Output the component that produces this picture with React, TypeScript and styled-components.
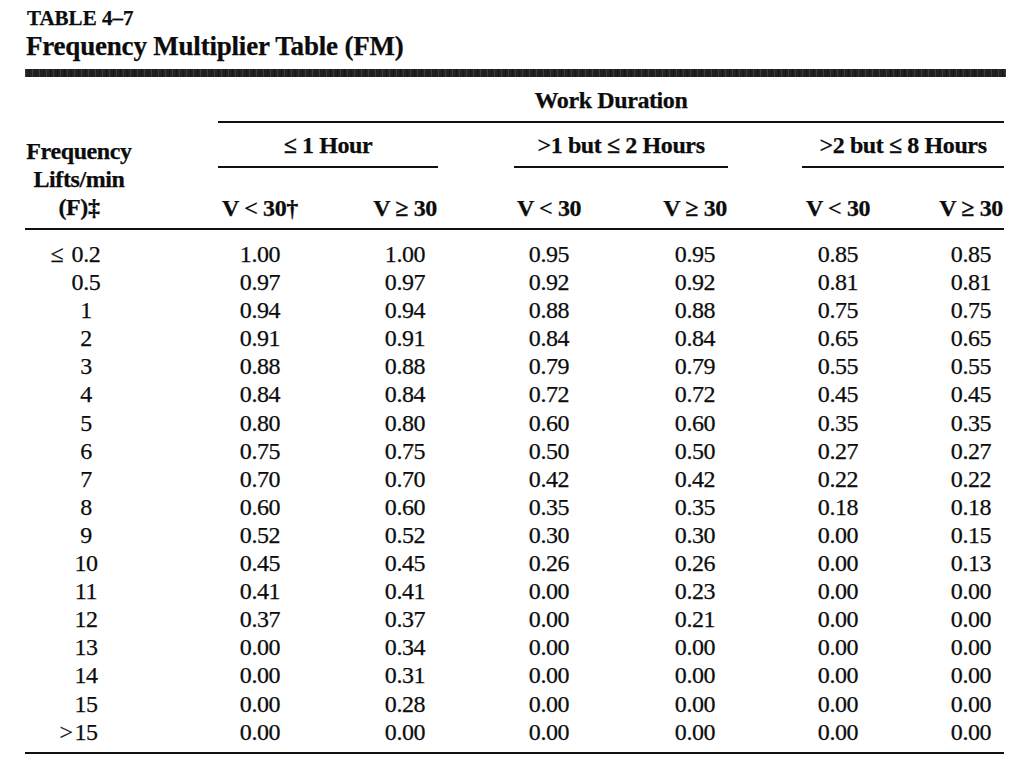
import * as React from "react";
import styled, { createGlobalStyle } from "styled-components";

const GlobalStyle = createGlobalStyle`
  html, body {
    margin: 0;
    padding: 0;
    background: #ffffff;
  }
  body {
    font-family: "Liberation Serif", "Times New Roman", serif;
    color: #0c0c0c;
    -webkit-text-stroke: 0.25px #0c0c0c;
  }
`;

// column tracks: label, then data / spacer pairs
const TRACKS =
  "193px 84px 70px 66px 76px 70px 78px 66px 74px 72px 64px 66px";
const DATA_COLS = [2, 4, 6, 8, 10, 12];

const groups = [
  { label: "≤ 1 Hour", col: "2 / 5" },
  { label: ">1 but ≤ 2 Hours", col: "6 / 9" },
  { label: ">2 but ≤ 8 Hours", col: "10 / 13" },
];

const colHeads = ["V < 30†", "V ≥ 30", "V < 30", "V ≥ 30", "V < 30", "V ≥ 30"];

// [prefix, freq, ...values]
const rows: [string, string, string[]][] = [
  ["≤", "0.2", ["1.00", "1.00", "0.95", "0.95", "0.85", "0.85"]],
  ["", "0.5", ["0.97", "0.97", "0.92", "0.92", "0.81", "0.81"]],
  ["", "1", ["0.94", "0.94", "0.88", "0.88", "0.75", "0.75"]],
  ["", "2", ["0.91", "0.91", "0.84", "0.84", "0.65", "0.65"]],
  ["", "3", ["0.88", "0.88", "0.79", "0.79", "0.55", "0.55"]],
  ["", "4", ["0.84", "0.84", "0.72", "0.72", "0.45", "0.45"]],
  ["", "5", ["0.80", "0.80", "0.60", "0.60", "0.35", "0.35"]],
  ["", "6", ["0.75", "0.75", "0.50", "0.50", "0.27", "0.27"]],
  ["", "7", ["0.70", "0.70", "0.42", "0.42", "0.22", "0.22"]],
  ["", "8", ["0.60", "0.60", "0.35", "0.35", "0.18", "0.18"]],
  ["", "9", ["0.52", "0.52", "0.30", "0.30", "0.00", "0.15"]],
  ["", "10", ["0.45", "0.45", "0.26", "0.26", "0.00", "0.13"]],
  ["", "11", ["0.41", "0.41", "0.00", "0.23", "0.00", "0.00"]],
  ["", "12", ["0.37", "0.37", "0.00", "0.21", "0.00", "0.00"]],
  ["", "13", ["0.00", "0.34", "0.00", "0.00", "0.00", "0.00"]],
  ["", "14", ["0.00", "0.31", "0.00", "0.00", "0.00", "0.00"]],
  ["", "15", ["0.00", "0.28", "0.00", "0.00", "0.00", "0.00"]],
  [">", "15", ["0.00", "0.00", "0.00", "0.00", "0.00", "0.00"]],
];

const Page = styled.div`
  width: 979px;
  padding: 6px 0 0 25px;
`;

const Caption = styled.div`
  padding-left: 2px;
  font-size: 21px;
  line-height: 24px;
  font-weight: bold;
`;

const Title = styled.h1`
  margin: 1px 0 0;
  padding-left: 1px;
  font-size: 27px;
  line-height: 30px;
  font-weight: bold;
  letter-spacing: -0.2px;
`;

const Bar = styled.div`
  height: 8px;
  margin: 8px -2px 0 0;
  background-color: #222222;
  background-image: repeating-linear-gradient(
    90deg,
    rgba(255, 255, 255, 0.12) 0 1px,
    transparent 1px 4px,
    rgba(0, 0, 0, 0.25) 4px 5px,
    transparent 5px 7px
  );
`;

const HeadGrid = styled.div`
  display: grid;
  grid-template-columns: ${TRACKS};
  margin-top: 10px;
  font-weight: bold;
  font-size: 24px;
  letter-spacing: -0.4px;
`;

const HeadCell = styled.div<{ $col: string; $row: number; $mt?: number }>`
  grid-column: ${(p) => p.$col};
  grid-row: ${(p) => p.$row};
  margin-top: ${(p) => p.$mt ?? 0}px;
  display: flex;
  justify-content: center;
  white-space: nowrap;
  line-height: 26px;
  height: 26px;
`;

const Rule = styled.div<{ $col?: string; $row?: number; $mt: number }>`
  grid-column: ${(p) => p.$col ?? "auto"};
  grid-row: ${(p) => p.$row ?? "auto"};
  margin-top: ${(p) => p.$mt}px;
  height: 2px;
  background: #111111;
`;

const Label = styled.div`
  grid-column: 1;
  grid-row: 3 / 6;
  align-self: end;
  width: 108px;
  text-align: center;
  line-height: 28px;
`;

const Body = styled.div`
  padding-top: 10px;
  font-size: 24px;
  letter-spacing: -0.4px;
`;

const Row = styled.div`
  display: grid;
  grid-template-columns: ${TRACKS};
  height: 28.1px;
  line-height: 28.1px;
`;

const FreqCell = styled.div`
  grid-column: 1;
  width: 122px;
  display: flex;
  justify-content: center;
  white-space: nowrap;
`;

const Sym = styled.span<{ $w: number }>`
  display: inline-block;
  width: ${(p) => p.$w}px;
  margin-left: -${(p) => p.$w}px;
`;

const ValueCell = styled.div<{ $col: number }>`
  grid-column: ${(p) => p.$col};
  display: flex;
  justify-content: center;
  white-space: nowrap;
`;

const BottomRule = styled.div`
  height: 2px;
  margin-top: 6px;
  background: #111111;
`;

export default function App() {
  return (
    <>
      <GlobalStyle />
      <Page>
        <Caption>TABLE 4–7</Caption>
        <Title>Frequency Multiplier Table (FM)</Title>
        <Bar />
        <HeadGrid>
          <HeadCell $col="2 / 13" $row={1}>
            Work Duration
          </HeadCell>
          <Rule $col="2 / 13" $row={2} $mt={8} />
          {groups.map((g) => (
            <HeadCell key={g.label} $col={g.col} $row={3} $mt={9}>
              {g.label}
            </HeadCell>
          ))}
          {groups.map((g) => (
            <Rule key={g.label} $col={g.col} $row={4} $mt={8} />
          ))}
          {colHeads.map((h, i) => (
            <HeadCell key={i} $col={String(DATA_COLS[i])} $row={5} $mt={27}>
              {h}
            </HeadCell>
          ))}
          <Label>
            Frequency
            <br />
            Lifts/min
            <br />
            (F)‡
          </Label>
        </HeadGrid>
        <Rule $mt={7} />
        <Body>
          {rows.map(([pre, freq, vals], r) => (
            <Row key={r}>
              <FreqCell>
                {pre && <Sym $w={pre === "≤" ? 21 : 15}>{pre}</Sym>}
                {freq}
              </FreqCell>
              {vals.map((v, i) => (
                <ValueCell key={i} $col={DATA_COLS[i]}>
                  {v}
                </ValueCell>
              ))}
            </Row>
          ))}
        </Body>
        <BottomRule />
      </Page>
    </>
  );
}
